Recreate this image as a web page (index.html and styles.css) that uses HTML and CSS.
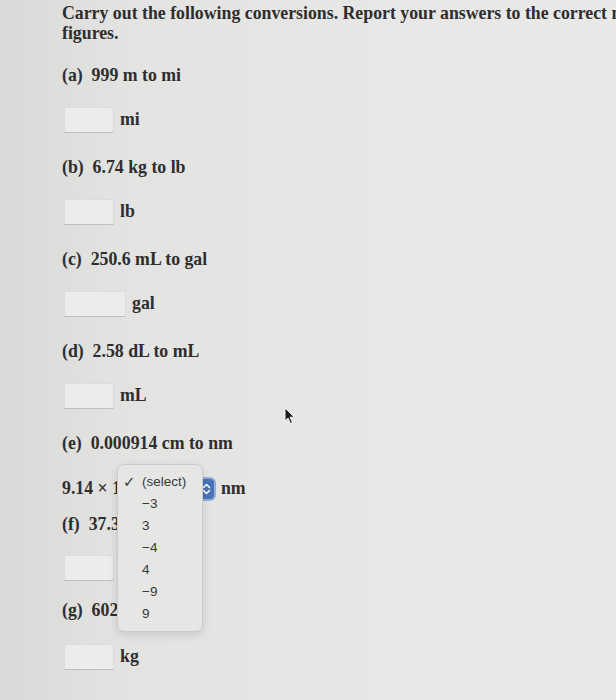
FILE: index.html
```html
<!DOCTYPE html>
<html>
<head>
<meta charset="utf-8">
<link rel="stylesheet" href="styles.css">
</head>
<body>
<div class="page">
  <p class="title">Carry out the following conversions. Report your answers to the correct number of significant figures.</p>

  <div class="q">(a)&nbsp; 999 m to mi</div>
  <div class="ans"><span class="box"></span><span class="unit">mi</span></div>

  <div class="q">(b)&nbsp; 6.74 kg to lb</div>
  <div class="ans"><span class="box"></span><span class="unit">lb</span></div>

  <div class="q">(c)&nbsp; 250.6 mL to gal</div>
  <div class="ans"><span class="box wide"></span><span class="unit">gal</span></div>

  <div class="q">(d)&nbsp; 2.58 dL to mL</div>
  <div class="ans"><span class="box"></span><span class="unit">mL</span></div>

  <div class="q">(e)&nbsp; 0.000914 cm to nm</div>
  <div class="ans sel-row">
    <span class="expr">9.14 × 10</span>
    <span class="select"><span class="sel-arrow"><svg width="9" height="12" viewBox="0 0 9 12"><path d="M1.5 4.5 L4.5 1.5 L7.5 4.5 M1.5 7.5 L4.5 10.5 L7.5 7.5" fill="none" stroke="#fff" stroke-width="1.6" stroke-linecap="round" stroke-linejoin="round"/></svg></span></span>
    <span class="unit">nm</span>
    <div class="menu">
      <div class="opt"><span class="check">✓</span>(select)</div>
      <div class="opt">−3</div>
      <div class="opt">3</div>
      <div class="opt">−4</div>
      <div class="opt">4</div>
      <div class="opt">−9</div>
      <div class="opt">9</div>
    </div>
  </div>

  <div class="q q-f">(f)&nbsp; 37.3</div>
  <div class="ans"><span class="box"></span><span class="unit"></span></div>

  <div class="q q-g">(g)&nbsp; 602</div>
  <div class="ans ans-g"><span class="box"></span><span class="unit">kg</span></div>

  <svg class="cursor" width="12" height="18" viewBox="0 0 12 18"><path d="M1 1 L1 14 L4 11 L6.5 16.5 L8.5 15.5 L6 10.2 L10.2 10.2 Z" fill="#1c1c1c" stroke="#f4f4f2" stroke-width="1"/></svg>
</div>
</body>
</html>
```

FILE: styles.css
```css
html, body {
  margin: 0;
  padding: 0;
}
body {
  width: 616px;
  height: 700px;
  overflow: hidden;
  background: linear-gradient(90deg, #d9d9d7 0%, #e3e3e1 20%, #e7e7e5 60%, #e9e9e7 100%);
  font-family: "Liberation Serif", "Times New Roman", serif;
  color: #2e2e2e;
}
.page {
  position: relative;
  padding: 3px 0 0 62px;
  width: 616px;
  height: 700px;
  box-sizing: border-box;
  overflow: hidden;
}
.title {
  margin: 0;
  font-weight: bold;
  font-size: 17.8px;
  line-height: 20px;
  width: 760px;
}
.q {
  font-weight: bold;
  font-size: 17.8px;
  line-height: 20px;
  height: 20px;
  margin-top: 22px;
  white-space: nowrap;
}
.ans {
  display: flex;
  align-items: center;
  height: 27px;
  margin-top: 21px;
  margin-left: 2px;
}
.ans + .q {
  margin-top: 24px;
}
.box {
  display: block;
  width: 50px;
  height: 26px;
  background: #ececea;
  border: 1px solid #dcdcda;
  border-bottom-color: #bdbdbb;
  box-sizing: border-box;
}
.box.wide {
  width: 62px;
}
.unit {
  font-weight: bold;
  font-size: 17.8px;
  margin-left: 6px;
}
.sel-row {
  position: relative;
  margin-left: 0;
  margin-top: 22px;
}
.expr {
  font-weight: bold;
  font-size: 17.8px;
  white-space: nowrap;
}
.select {
  display: flex;
  justify-content: flex-end;
  align-items: center;
  width: 81px;
  height: 20px;
  margin-left: 3px;
  background: #f2f2f0;
  border-radius: 5px;
}
.sel-arrow {
  display: flex;
  align-items: center;
  justify-content: center;
  width: 14px;
  height: 20px;
  background: #4a73b8;
  border-radius: 4px;
  box-shadow: 0 0 0 2px rgba(90,130,200,0.55);
}
.sel-row .unit {
  margin-left: 7px;
}
.sel-row + .q {
  margin-top: 12px;
}
.menu {
  position: absolute;
  left: 55px;
  top: -11px;
  width: 84px;
  padding: 6px 0;
  background: #e6e6e4;
  border: 1px solid #cbcbc9;
  border-radius: 7px;
  box-shadow: 0 3px 10px rgba(0,0,0,0.12);
  font-family: "Liberation Sans", Arial, sans-serif;
  font-size: 13.5px;
  color: #3a3a3a;
  z-index: 2;
}
.opt {
  height: 22px;
  line-height: 22px;
  padding-left: 24px;
  position: relative;
}
.check {
  position: absolute;
  left: 5px;
  font-family: "DejaVu Sans", sans-serif;
  font-size: 15px;
  font-weight: bold;
}
.ans + .q-f {
  margin-top: 12px;
}
.q-f + .ans {
  margin-top: 20px;
}
.ans + .q-g {
  margin-top: 19px;
}
.q-g + .ans-g {
  margin-top: 23px;
}
.cursor {
  position: absolute;
  left: 284px;
  top: 407px;
}
```
